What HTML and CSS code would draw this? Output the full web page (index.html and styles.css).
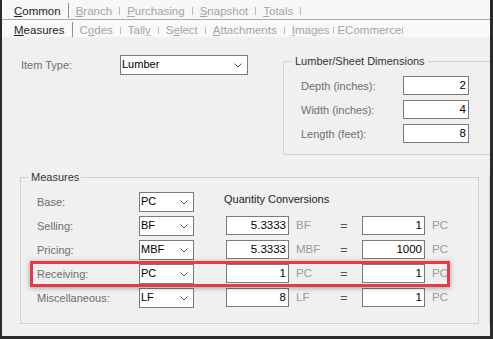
FILE: index.html
```html
<!DOCTYPE html>
<html lang="en">
<head>
    <meta charset="UTF-8">
    <title>Item Measures</title>
    <link rel="stylesheet" href="styles.css">
</head>
<body>
<div class="window">

    <!-- Pestañas principales -->
    <div class="tabs tabs-main">
        <span class="tab active"><u>C</u>ommon</span><span class="sep sep-active"></span>
        <span class="tab"><u>B</u>ranch</span><span class="sep"></span>
        <span class="tab"><u>P</u>urchasing</span><span class="sep"></span>
        <span class="tab"><u>S</u>napshot</span><span class="sep"></span>
        <span class="tab"><u>T</u>otals</span><span class="sep"></span>
    </div>

    <!-- Sub pestañas -->
    <div class="tabs tabs-sub">
        <span class="tab active"><u>M</u>easures</span><span class="sep sep-active"></span>
        <span class="tab">C<u>o</u>des</span><span class="sep"></span>
        <span class="tab">Tall<u>y</u></span><span class="sep"></span>
        <span class="tab">S<u>e</u>lect</span><span class="sep"></span>
        <span class="tab"><u>A</u>ttachments</span><span class="sep"></span>
        <span class="tab tab-tight"><u>I</u>mages</span><span class="sep"></span>
        <span class="tab tab-last">ECommerce</span><span class="sep"></span>
    </div>

    <div class="content">
        <div class="top-section">
            <span class="label item-label">Item Type:</span>
            <div class="combo combo-wide">
                <span>Lumber</span>
                <svg class="chevron" width="8" height="5" viewBox="0 0 8 5"><path d="M0.5 0.5 L4 4 L7.5 0.5" fill="none" stroke="#555" stroke-width="1"/></svg>
            </div>

            <fieldset class="group dims">
                <legend>Lumber/Sheet Dimensions</legend>
                <div class="dims-body">
                    <div class="dim-row"><span class="label dim-label">Depth (inches):</span><div class="num dim-num">2</div></div>
                    <div class="dim-row"><span class="label dim-label">Width (inches):</span><div class="num dim-num">4</div></div>
                    <div class="dim-row"><span class="label dim-label">Length (feet):</span><div class="num dim-num">8</div></div>
                </div>
            </fieldset>
        </div>

        <div class="bottom-section">
            <fieldset class="group measures">
                <legend>Measures</legend>
                <div class="measures-body">
                    <div class="m-row">
                        <span class="label m-label">Base:</span>
                        <div class="combo combo-small"><span>PC</span><svg class="chevron" width="8" height="5" viewBox="0 0 8 5"><path d="M0.5 0.5 L4 4 L7.5 0.5" fill="none" stroke="#555" stroke-width="1"/></svg></div>
                        <span class="qty-header">Quantity Conversions</span>
                    </div>
                    <div class="m-row">
                        <span class="label m-label">Selling:</span>
                        <div class="combo combo-small"><span>BF</span><svg class="chevron" width="8" height="5" viewBox="0 0 8 5"><path d="M0.5 0.5 L4 4 L7.5 0.5" fill="none" stroke="#555" stroke-width="1"/></svg></div>
                        <div class="num qty">5.3333</div><span class="unit">BF</span><span class="equals">=</span>
                        <div class="num qty qty-right">1</div><span class="unit">PC</span>
                    </div>
                    <div class="m-row">
                        <span class="label m-label">Pricing:</span>
                        <div class="combo combo-small"><span>MBF</span><svg class="chevron" width="8" height="5" viewBox="0 0 8 5"><path d="M0.5 0.5 L4 4 L7.5 0.5" fill="none" stroke="#555" stroke-width="1"/></svg></div>
                        <div class="num qty">5.3333</div><span class="unit">MBF</span><span class="equals">=</span>
                        <div class="num qty qty-right">1000</div><span class="unit">PC</span>
                    </div>
                    <div class="m-row">
                        <span class="label m-label">Receiving:</span>
                        <div class="combo combo-small"><span>PC</span><svg class="chevron" width="8" height="5" viewBox="0 0 8 5"><path d="M0.5 0.5 L4 4 L7.5 0.5" fill="none" stroke="#555" stroke-width="1"/></svg></div>
                        <div class="num qty">1</div><span class="unit">PC</span><span class="equals">=</span>
                        <div class="num qty qty-right">1</div><span class="unit">PC</span>
                    </div>
                    <div class="m-row">
                        <span class="label m-label">Miscellaneous:</span>
                        <div class="combo combo-small"><span>LF</span><svg class="chevron" width="8" height="5" viewBox="0 0 8 5"><path d="M0.5 0.5 L4 4 L7.5 0.5" fill="none" stroke="#555" stroke-width="1"/></svg></div>
                        <div class="num qty">8</div><span class="unit">LF</span><span class="equals">=</span>
                        <div class="num qty qty-right">1</div><span class="unit">PC</span>
                    </div>
                </div>
            </fieldset>
            <div class="group-stub"></div>
        </div>
    </div>

    <!-- Resaltado de la fila Receiving -->
    <div class="highlight"></div>
</div>
</body>
</html>
```

FILE: styles.css
```css
body {
    margin: 0;
    font-family: "Liberation Sans", Arial, sans-serif;
}

.window {
    position: relative;
    width: 493px;
    height: 339px;
    box-sizing: border-box;
    border-left: 2px solid #2a2a2a;
    border-right: 3px solid #2a2a2a;
    border-bottom: 3px solid #2a2a2a;
    background-color: #f0f0f0;
    overflow: hidden;
}

/* Pestañas */
.tabs {
    display: flex;
    padding-left: 5px;
    font-size: 11.5px;
    line-height: 14px;
    color: #a4a4a4;
}

.tabs-main {
    height: 19px;
    background-color: #f7f7f7;
    border-bottom: 1px solid #aaaaaa;
}

.tabs-sub {
    height: 17px;
    background-color: #f9f9f9;
}

.tab {
    padding: 4px 7px 0;
    white-space: nowrap;
}

.tabs-sub .tab {
    padding-top: 3px;
}

.tab.active {
    color: #1e1e1e;
}

.tabs-sub .tab-tight {
    padding-right: 4px;
}

.tabs-sub .tab-last {
    padding: 3px 1px 0 3px;
}

.sep {
    width: 1px;
    height: 8px;
    margin-bottom: 4px;
    align-self: flex-end;
    background-color: #bcbcbc;
}

.tabs-sub .sep {
    height: 7px;
    margin-bottom: 3px;
}

.sep.sep-active,
.tabs-sub .sep.sep-active {
    height: 15px;
    margin-bottom: 1px;
    background-color: #8e8e8e;
}

.tabs-sub .sep.sep-active {
    margin-bottom: 0;
}

/* Contenido */
.content {
    padding-top: 18px;
}

.label {
    font-size: 11px;
    color: #6e6e6e;
    white-space: nowrap;
}

.top-section {
    display: flex;
    align-items: flex-start;
    padding-left: 19px;
}

.item-label {
    width: 99px;
    line-height: 20px;
}

.combo {
    height: 20px;
    box-sizing: border-box;
    border: 1px solid #7a7a7a;
    background-color: #fff;
    display: flex;
    align-items: center;
    justify-content: space-between;
    padding: 0 5px 0 1px;
    font-size: 11px;
    color: #000;
}

.combo span {
    margin-top: -2px;
}

.combo-wide {
    width: 128px;
}

.combo-small {
    width: 55px;
}

.chevron {
    display: block;
}

.group {
    margin: 0;
    padding: 0;
    min-width: 0;
    border: 1px solid #d0d0d0;
}

.group legend {
    margin-left: 9px;
    padding: 0 2px;
    font-size: 11px;
    line-height: 13px;
    color: #333;
}

.dims {
    flex: 1;
    margin-left: 35px;
    border-right: none;
}

.dims-body {
    display: flex;
    flex-direction: column;
    gap: 5px;
    padding: 8px 0 11px 17px;
}

.dim-row {
    display: flex;
    align-items: center;
    height: 19px;
}

.dim-label {
    width: 102px;
}

.num {
    height: 19px;
    box-sizing: border-box;
    border: 1px solid #7a7a7a;
    background-color: #fff;
    text-align: right;
    padding-right: 2px;
    font-size: 11.5px;
    line-height: 16px;
    color: #000;
}

.dim-num {
    width: 66px;
}

.bottom-section {
    display: flex;
    align-items: flex-start;
    margin-top: 16px;
    padding-left: 18px;
}

.measures {
    width: 459px;
    box-sizing: border-box;
    flex-shrink: 0;
}

.measures legend {
    margin-left: 8px;
}

.measures-body {
    display: flex;
    flex-direction: column;
    gap: 4px;
    padding: 8px 0 15px 16px;
}

.m-row {
    display: flex;
    align-items: flex-start;
    height: 20px;
}

.m-label {
    width: 102px;
    line-height: 20px;
}

.qty-header {
    margin-left: 30px;
    font-size: 11px;
    line-height: 14px;
    color: #222;
}

.qty {
    width: 63px;
    margin-left: 32px;
}

.qty.qty-right {
    margin-left: 0;
}

.unit {
    width: 44px;
    margin-left: 7px;
    font-size: 11.5px;
    line-height: 19px;
    color: #9a9a9a;
}

.equals {
    width: 22px;
    font-size: 13px;
    line-height: 19px;
    color: #555;
}

.group-stub {
    flex: 1;
    height: 148px;
    margin: 4px 0 0 10px;
    border: 1px solid #d0d0d0;
    border-right: none;
}

/* Resaltado */
.highlight {
    position: absolute;
    left: 28px;
    top: 261px;
    width: 420px;
    height: 26px;
    box-sizing: border-box;
    border: 3px solid #e63c44;
    box-shadow: 0 1px 5px rgba(0, 0, 0, 0.35);
}
```
